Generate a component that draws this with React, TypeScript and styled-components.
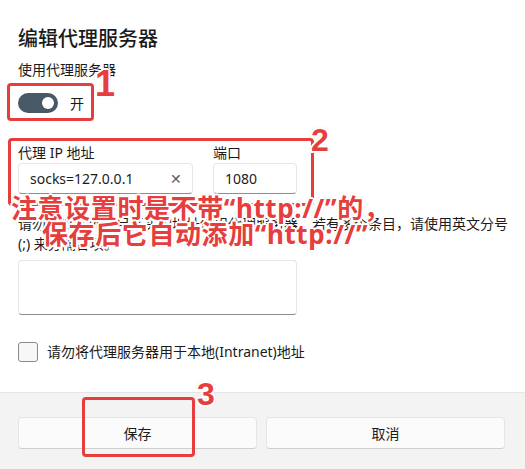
import React from "react";
import styled, { createGlobalStyle } from "styled-components";

const Global = createGlobalStyle`
  html, body { margin: 0; padding: 0; background: #ffffff; }
  body { font-family: "Noto Sans", "Noto Sans CJK SC", sans-serif; color: #1b1b1b; }
  * { box-sizing: border-box; }
`;

const RED = "#e63d3d";

const Dialog = styled.div`
  position: relative;
  width: 525px;
  height: 469px;
  display: flex;
  flex-direction: column;
  background: #ffffff;
  overflow: hidden;
`;

const Body = styled.div`
  display: flex;
  flex-direction: column;
  align-items: flex-start;
  padding: 24px 12px 0 18px;
`;

const Title = styled.h1`
  margin: 0;
  font-family: "Noto Sans CJK SC", sans-serif;
  font-size: 20px;
  font-weight: 500;
  line-height: 28px;
`;

const Label = styled.div<{ $mt?: number }>`
  margin-top: ${(p) => p.$mt ?? 0}px;
  font-family: "Noto Sans", "Noto Sans CJK SC", sans-serif;
  font-size: 14px;
  line-height: 20px;
`;

const ToggleRow = styled.div`
  margin-top: 13px;
  display: flex;
  align-items: center;
  gap: 12px;
  height: 20px;
`;

const Track = styled.div`
  width: 40px;
  height: 20px;
  border-radius: 10px;
  background: #475866;
  display: flex;
  align-items: center;
  justify-content: flex-end;
  padding-right: 4px;
`;

const Knob = styled.div`
  width: 12px;
  height: 12px;
  border-radius: 50%;
  background: #ffffff;
`;

const ToggleText = styled.span`
  font-family: "Noto Sans CJK SC", sans-serif;
  font-size: 14px;
  line-height: 20px;
`;

const FieldRow = styled.div`
  margin-top: 30px;
  display: flex;
  gap: 20px;
`;

const Field = styled.div<{ $w: number }>`
  width: ${(p) => p.$w}px;
  display: flex;
  flex-direction: column;
`;

const TextBox = styled.div<{ $h?: number }>`
  height: ${(p) => p.$h ?? 31}px;
  display: flex;
  align-items: center;
  justify-content: space-between;
  padding: 0 10px 0 11px;
  background: #ffffff;
  border: 1px solid #e6e6e6;
  border-bottom-color: #8d8d8d;
  border-radius: 4px;
  font-family: "Noto Sans", sans-serif;
  font-size: 14px;
  color: #1b1b1b;
`;

const Clear = styled.span`
  color: #5c5c5c;
  font-size: 14px;
  line-height: 1;
  font-family: "DejaVu Sans", sans-serif;
  font-weight: 300;
`;

const Paragraph = styled.p`
  margin: 20px 0 0 0;
  width: 495px;
  font-family: "Noto Sans", "Noto Sans CJK SC", sans-serif;
  font-size: 14px;
  line-height: 20px;
`;

const Area = styled.div`
  margin-top: 6px;
  width: 279px;
  height: 55px;
  background: #ffffff;
  border: 1px solid #e6e6e6;
  border-bottom-color: #8d8d8d;
  border-radius: 4px;
`;

const CheckRow = styled.div`
  margin-top: 27px;
  display: flex;
  align-items: center;
  gap: 9px;
`;

const Box = styled.div`
  width: 20px;
  height: 20px;
  border: 1px solid #8a8a8a;
  border-radius: 3px;
  background: #f7f7f7;
`;

const Footer = styled.div`
  margin-top: auto;
  height: 77px;
  background: #f3f3f3;
  border-top: 1px solid #e5e5e5;
  display: grid;
  grid-template-columns: 239px 239px;
  gap: 9px;
  padding: 24px 20px 0 18px;
  align-content: start;
`;

const Button = styled.button`
  height: 32px;
  background: #fbfbfb;
  border: 1px solid #e5e5e5;
  border-bottom-color: #cfcfcf;
  border-radius: 4px;
  font-family: "Noto Sans CJK SC", sans-serif;
  font-size: 14px;
  color: #1b1b1b;
  padding: 0;
`;

const Mark = styled.div<{ $x: number; $y: number; $w: number; $h: number }>`
  position: absolute;
  left: ${(p) => p.$x}px;
  top: ${(p) => p.$y}px;
  width: ${(p) => p.$w}px;
  height: ${(p) => p.$h}px;
  border: 3px solid ${RED};
  border-radius: 4px;
  pointer-events: none;
`;

const outline = `
  -1.5px -1.5px 0 #fff, 1.5px -1.5px 0 #fff, -1.5px 1.5px 0 #fff, 1.5px 1.5px 0 #fff,
  0 -2px 0 #fff, 0 2px 0 #fff, -2px 0 0 #fff, 2px 0 0 #fff,
  0 0 3px rgba(180, 30, 30, 0.7)
`;

const Num = styled.div<{ $x: number; $y: number; $size: number }>`
  position: absolute;
  left: ${(p) => p.$x}px;
  top: ${(p) => p.$y}px;
  font-family: "Liberation Sans", sans-serif;
  font-weight: 700;
  font-size: ${(p) => p.$size}px;
  line-height: 1;
  color: ${RED};
  text-shadow: ${outline};
  pointer-events: none;
`;

const Note = styled.div`
  position: absolute;
  left: 11px;
  top: 195px;
  font-family: "Noto Sans", "Noto Sans CJK SC", sans-serif;
  font-weight: 700;
  font-size: 26px;
  line-height: 26px;
  letter-spacing: 0.6px;
  color: ${RED};
  text-shadow: ${outline};
  white-space: nowrap;
  pointer-events: none;
`;

const NoteLine = styled.div<{ $indent?: number }>`
  padding-left: ${(p) => p.$indent ?? 0}px;
`;

export default function App() {
  return (
    <>
      <Global />
      <Dialog>
        <Body>
          <Title>编辑代理服务器</Title>
          <Label $mt={8}>使用代理服务器</Label>
          <ToggleRow>
            <Track>
              <Knob />
            </Track>
            <ToggleText>开</ToggleText>
          </ToggleRow>
          <FieldRow>
            <Field $w={175}>
              <Label>代理 IP 地址</Label>
              <TextBox>
                <span>socks=127.0.0.1</span>
                <Clear>✕</Clear>
              </TextBox>
            </Field>
            <Field $w={84}>
              <Label>端口</Label>
              <TextBox>
                <span>1080</span>
              </TextBox>
            </Field>
          </FieldRow>
          <Paragraph>
            请勿对以下列条目开头的地址使用代理服务器。若有多个条目，请使用英文分号(;) 来分隔各项。
          </Paragraph>
          <Area />
          <CheckRow>
            <Box />
            <Label>请勿将代理服务器用于本地(Intranet)地址</Label>
          </CheckRow>
        </Body>
        <Footer>
          <Button>保存</Button>
          <Button>取消</Button>
        </Footer>

        <Mark $x={7} $y={83} $w={87} $h={38} />
        <Num $x={95} $y={66} $size={36}>1</Num>
        <Mark $x={8} $y={138} $w={306} $h={68} />
        <Num $x={311} $y={124} $size={32}>2</Num>
        <Mark $x={82} $y={397} $w={113} $h={60} />
        <Num $x={197} $y={378} $size={32}>3</Num>
        <Note>
          <NoteLine>注意设置时是不带“http://”的，</NoteLine>
          <NoteLine $indent={31}>保存后它自动添加“http://”</NoteLine>
        </Note>
      </Dialog>
    </>
  );
}
